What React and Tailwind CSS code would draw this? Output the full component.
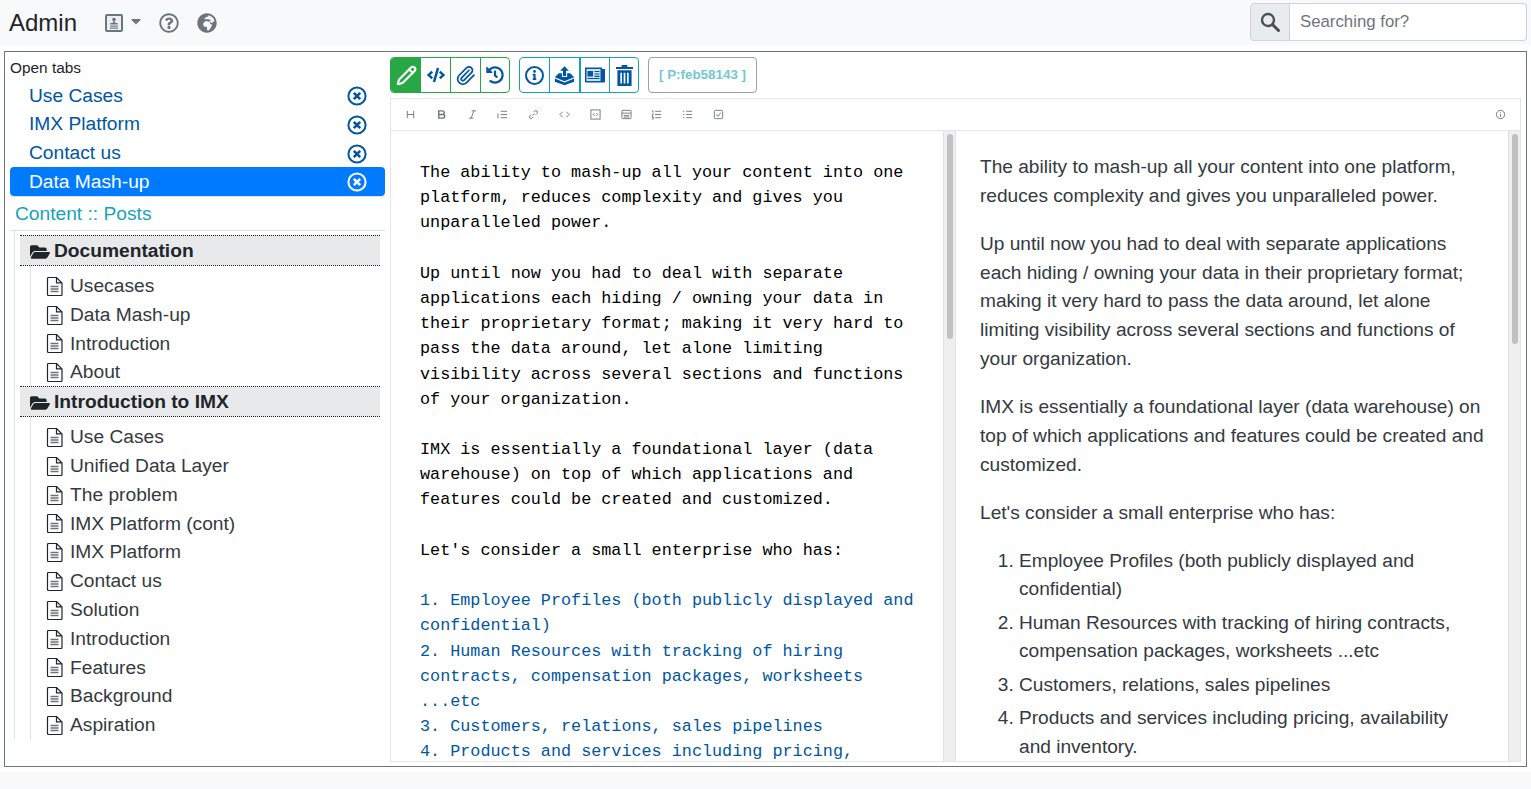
import React from "react";
import {
  FaCode,
  FaHistory,
  FaRegQuestionCircle,
  FaGlobeAfrica,
  FaFolderOpen,
  FaCaretDown,
  FaInfo,
} from "react-icons/fa";
import { Paperclip, Pencil } from "lucide-react";

const sans = "font-['Liberation_Sans',Arial,sans-serif]";

const openTabs = ["Use Cases", "IMX Platform", "Contact us", "Data Mash-up"];

const tree = [
  { title: "Documentation", items: ["Usecases", "Data Mash-up", "Introduction", "About"] },
  {
    title: "Introduction to IMX",
    items: [
      "Use Cases",
      "Unified Data Layer",
      "The problem",
      "IMX Platform (cont)",
      "IMX Platform",
      "Contact us",
      "Solution",
      "Introduction",
      "Features",
      "Background",
      "Aspiration",
    ],
  },
];

const sourceLines = [
  ["The ability to mash-up all your content into one", 0],
  ["platform, reduces complexity and gives you", 0],
  ["unparalleled power.", 0],
  ["", 0],
  ["Up until now you had to deal with separate", 0],
  ["applications each hiding / owning your data in", 0],
  ["their proprietary format; making it very hard to", 0],
  ["pass the data around, let alone limiting", 0],
  ["visibility across several sections and functions", 0],
  ["of your organization.", 0],
  ["", 0],
  ["IMX is essentially a foundational layer (data", 0],
  ["warehouse) on top of which applications and", 0],
  ["features could be created and customized.", 0],
  ["", 0],
  ["Let's consider a small enterprise who has:", 0],
  ["", 0],
  ["1. Employee Profiles (both publicly displayed and", 1],
  ["confidential)", 1],
  ["2. Human Resources with tracking of hiring", 1],
  ["contracts, compensation packages, worksheets", 1],
  ["...etc", 1],
  ["3. Customers, relations, sales pipelines", 1],
  ["4. Products and services including pricing,", 1],
];

function ContactIcon() {
  return (
    <svg viewBox="0 0 18 18" className="w-[18px] h-[18px]" fill="none">
      <rect x="1" y="1" width="16" height="16" rx="1" stroke="#6c757d" strokeWidth="2" fill="#eceeef" />
      <circle cx="9" cy="5.6" r="1.8" fill="#6c757d" />
      <path d="M8 7.4h2l.3 1.6h2.4v1.4H5.3V9h2.4z" fill="#6c757d" />
      <rect x="5" y="11.6" width="8" height="1.1" fill="#6c757d" />
      <rect x="5" y="13.6" width="8" height="1.1" fill="#6c757d" />
    </svg>
  );
}

function SearchIcon() {
  return (
    <svg viewBox="0 0 20 20" className="w-[20px] h-[20px]" fill="none" stroke="#495057">
      <circle cx="8" cy="8" r="6" strokeWidth="2.4" />
      <path d="M12.5 12.5l6 6" strokeWidth="3" strokeLinecap="round" />
    </svg>
  );
}

function CloseIcon() {
  return (
    <svg viewBox="0 0 20 20" className="w-[20px] h-[20px]" fill="none" stroke="currentColor">
      <circle cx="10" cy="10" r="8.6" strokeWidth="2" />
      <path d="M6.8 6.8l6.4 6.4M13.2 6.8l-6.4 6.4" strokeWidth="2.6" />
    </svg>
  );
}

function DocIcon() {
  return (
    <svg viewBox="0 0 17 19" className="w-[17px] h-[19px] shrink-0" fill="none">
      <path d="M1.5 1.5a1 1 0 011-1h8l5.5 5.5v11.5a1 1 0 01-1 1h-12.5a1 1 0 01-1-1z" stroke="#212529" strokeWidth="1.2" />
      <path d="M10.5.8v5h5.3" stroke="#212529" strokeWidth="1.2" />
      <path d="M4.5 9.5h8M4.5 12h8M4.5 14.5h8" stroke="#6f7378" strokeWidth="1.3" />
    </svg>
  );
}

function UploadBoxIcon() {
  return (
    <svg viewBox="0 0 24 24" className="w-[21px] h-[21px]" fill="#0056a3">
      <path d="M12 1.5l5 5h-3.2v6h-3.6v-6H7z" />
      <path d="M5.5 9.5H9v4.2h6V9.5h3.5L23 14l-11 4.5L1 14z" />
      <path d="M1 15.5l11 4.5 11-4.5V19l-11 4L1 19z" />
    </svg>
  );
}

function NewspaperIcon() {
  return (
    <svg viewBox="0 0 20 18" className="w-[20px] h-[18px]">
      <path d="M0 1.5h17V3h3v12.5a1 1 0 01-1 1H1a1 1 0 01-1-1z" fill="#0056a3" />
      <rect x="1.5" y="3" width="14" height="12" fill="#cfe0ee" />
      <rect x="2.5" y="5" width="5.5" height="5.5" fill="#0056a3" />
      <path d="M9.5 5.5h5M9.5 8h5M9.5 10.3h5M2.5 12.5h12" stroke="#0056a3" strokeWidth="1.2" />
    </svg>
  );
}

function TrashIcon() {
  return (
    <svg viewBox="0 0 18 22" className="w-[17px] h-[21px]" fill="#0056a3">
      <path d="M6 0h6v2h6v2.2H0V2h6z" />
      <path d="M1.5 5.5h15V22h-15zM4.6 8v11.5h1.7V8zM8.1 8v11.5h1.8V8zM11.7 8v11.5h1.7V8z" fillRule="evenodd" />
    </svg>
  );
}

function InfoRingIcon() {
  return (
    <span className="flex items-center justify-center w-[19px] h-[19px] rounded-full border-2 border-[#0056a3] text-[#0056a3]">
      <FaInfo className="w-[9px] h-[10px]" />
    </span>
  );
}

function ToolBtn({ children, className = "" }) {
  return <div className={`flex items-center justify-center h-full ${className}`}>{children}</div>;
}

// small gray editor toolbar glyphs
function EdIcon({ children, className = "" }) {
  return (
    <svg viewBox="0 0 12 12" className={`w-[11px] h-[11px] ${className}`} fill="none" stroke="#6c757d" strokeWidth="1">
      {children}
    </svg>
  );
}

const editorTools = [
  <EdIcon><path d="M2.5 2v8M9.5 2v8M2.5 6h7" /></EdIcon>,
  <EdIcon><path d="M3 2h4a2 2 0 010 4H3zM3 6h4.5a2 2 0 010 4H3z" strokeWidth="1.5" /></EdIcon>,
  <EdIcon><path d="M5 2h5M2 10h5M7.5 2l-3 8" /></EdIcon>,
  <EdIcon><path d="M4 2.5h7M4 6h7M4 9.5h7M1 5v5" /></EdIcon>,
  <EdIcon><path d="M5 7l2-2M3.5 6L2 7.5a1.8 1.8 0 002.5 2.5L6 8.5M6 3.5L7.5 2a1.8 1.8 0 012.5 2.5L8.5 6" /></EdIcon>,
  <EdIcon><path d="M4 3L1 6l3 3M8 3l3 3-3 3" /></EdIcon>,
  <EdIcon><rect x="1" y="1" width="10" height="10" /><path d="M5 4.5L3.5 6 5 7.5M7 4.5L8.5 6 7 7.5" /></EdIcon>,
  <EdIcon><rect x="1" y="1.5" width="10" height="9" rx="1" /><path d="M1 4.5h10M3 7h6M3 8.8h6" /></EdIcon>,
  <EdIcon><path d="M4.5 2.5H11M4.5 6H11M4.5 9.5H11M1 2h1.2v2M1 5.5h1.5L1 8h1.5M1 9h1.5v2H1" /></EdIcon>,
  <EdIcon><path d="M4.5 2.5H11M4.5 6H11M4.5 9.5H11M1 2.5h1.5M1 6h1.5M1 9.5h1.5" /></EdIcon>,
  <EdIcon><rect x="1.5" y="1.5" width="9" height="9" rx="1" /><path d="M3.5 6l2 2 3-4" /></EdIcon>,
];

export default function App() {
  return (
    <div className={`${sans} w-[1531px] h-[789px] overflow-hidden bg-white text-[#212529] flex flex-col`}>
      {/* top navbar */}
      <header className="h-[45px] shrink-0 bg-[#f8f9fa] flex items-center justify-between pl-[9px] pr-[4px]">
        <div className="flex items-center">
          <span className="text-[24px] leading-none">Admin</span>
          <div className="flex items-center ml-[28px] text-[#6c757d]">
            <ContactIcon />
            <FaCaretDown className="ml-[5px] w-[16px] h-[16px] mt-[-4px]" />
            <FaRegQuestionCircle className="ml-[15px] w-[20px] h-[20px]" />
            <FaGlobeAfrica className="ml-[18px] w-[20px] h-[20px]" />
          </div>
        </div>
        <div className="flex h-[38px] w-[277px] mt-[-1px]">
          <div className="w-[40px] flex items-center justify-center bg-[#e9ecef] border border-[#ced4da] rounded-l-[4px]">
            <SearchIcon />
          </div>
          <div className="flex-1 flex items-center pl-[10px] bg-white border border-l-0 border-[#ced4da] rounded-r-[4px] text-[16.8px] text-[#6c757d]">
            Searching for?
          </div>
        </div>
      </header>

      {/* main frame */}
      <main className="mx-[4px] mt-[6px] h-[716px] w-[1523px] shrink-0 border border-[#6c757d] flex overflow-hidden">
        <aside className="w-[385px] shrink-0 pl-[5px] pr-[5px] flex flex-col">
          <div className="text-[15.4px] leading-[18px] mt-[7px]">Open tabs</div>
          <ul className="mt-[3.6px] text-[19.2px] text-[#0056a3]">
            {openTabs.map((t, i) => (
              <li
                key={t}
                className={`flex items-center justify-between h-[28.8px] pt-[2px] pl-[19px] pr-[18px] ${
                  i === 3 ? "bg-[#007bff] text-white rounded-[4px]" : ""
                }`}
              >
                <span>{t}</span>
                <CloseIcon />
              </li>
            ))}
          </ul>
          <div className="h-[35.2px] border-t border-b border-[#dee2e6] pl-[5px] text-[19.2px] leading-[33px] text-[#17a2b8]">
            Content :: Posts
          </div>
          <div className="ml-[4px] pl-[5px] border-l border-[#dee2e6] pt-[4px]">
            {tree.map((group) => (
              <div key={group.title}>
                <div className="flex items-center h-[31px] pt-[2px] w-[360px] bg-[#e8e9eb] border-y border-dotted border-[#212529] pl-[10px] text-[19.2px] font-bold">
                  <FaFolderOpen className="w-[20px] h-[20px] mr-[4px] mt-[1px]" />
                  {group.title}
                </div>
                <ul className="ml-[10px] pl-[15px] pt-[6px] mb-[-1px] border-l border-[#dee2e6] text-[19.2px] text-[#343a40]">
                  {group.items.map((item, i) => (
                    <li key={item + i} className="flex items-center h-[28.8px] gap-[7px]">
                      <DocIcon />
                      {item}
                    </li>
                  ))}
                </ul>
              </div>
            ))}
          </div>
        </aside>

        <section className="flex-1 min-w-0 flex flex-col">
          {/* action buttons */}
          <div className="h-[46px] shrink-0 flex items-start pt-[5px]">
            <div className="flex h-[36px] border border-[#28a745] rounded-[4px] overflow-hidden text-[#0056a3]">
              <ToolBtn className="w-[30px] bg-[#28a745] text-white"><Pencil className="w-[21px] h-[21px]" strokeWidth={2.4} /></ToolBtn>
              <ToolBtn className="w-[29px]"><FaCode className="w-[18px] h-[18px]" /></ToolBtn>
              <ToolBtn className="w-[30px] border-l border-[#28a745]"><Paperclip className="w-[21px] h-[21px]" strokeWidth={2} /></ToolBtn>
              <ToolBtn className="w-[29px] border-l border-[#28a745]"><FaHistory className="w-[18px] h-[18px]" /></ToolBtn>
            </div>
            <div className="flex h-[36px] ml-[9px] border border-[#17a2b8] rounded-[4px] overflow-hidden">
              <ToolBtn className="w-[29px]"><InfoRingIcon /></ToolBtn>
              <ToolBtn className="w-[30px] border-l border-[#17a2b8]"><UploadBoxIcon /></ToolBtn>
              <ToolBtn className="w-[30px] border-l-2 border-[#17a2b8]"><NewspaperIcon /></ToolBtn>
              <ToolBtn className="w-[29px] border-l border-[#17a2b8]"><TrashIcon /></ToolBtn>
            </div>
            <div className="flex items-center justify-center h-[36px] w-[109px] ml-[9px] border border-[#9ba1a6] rounded-[4px] text-[13.4px] font-bold text-[#74c7d4]">
              [ P:feb58143 ]
            </div>
          </div>

          {/* editor */}
          <div className="w-[1131px] h-[664px] border border-[#e2e6ec] flex flex-col">
            <div className="h-[32px] shrink-0 border-b border-[#e2e6ec] flex items-center justify-between pl-[14px] pr-[14px]">
              <div className="flex items-center gap-[19.8px]">
                {editorTools.map((t, i) => (
                  <span key={i} className="flex">{t}</span>
                ))}
              </div>
              <EdIcon><circle cx="6" cy="6" r="4.5" /><path d="M6 5.5v3M6 3.5v1" /></EdIcon>
            </div>
            <div className="flex-1 min-h-0 flex">
              <div className="w-[564px] shrink-0 flex overflow-hidden">
                <div className="w-[552px] shrink-0 pl-[29px] pt-[29px] font-['Liberation_Mono',monospace] text-[16.8px] leading-[25.2px] text-black">
                  {sourceLines.map(([line, blue], i) => (
                    <div key={i} className={`h-[25.2px] whitespace-pre ${blue ? "text-[#0056a3]" : ""}`}>
                      {line}
                    </div>
                  ))}
                </div>
                <div className="w-[12px] shrink-0 bg-[#efefef] border-l border-[#e0e0e0] pt-[3px] flex justify-center">
                  <div className="w-[6px] h-[205px] bg-[#c1c1c1] rounded-full" />
                </div>
              </div>
              <div className="flex-1 flex overflow-hidden">
                <div className="flex-1 pl-[24px] pt-[22px] pr-[18px] text-[19.12px] leading-[28.8px] text-[#343a40] border-l border-[#e2e6ec]">
                  <p className="mb-[19.2px]">The ability to mash-up all your content into one platform, reduces complexity and gives you unparalleled power.</p>
                  <p className="mb-[19.2px]">Up until now you had to deal with separate applications each hiding / owning your data in their proprietary format; making it very hard to pass the data around, let alone limiting visibility across several sections and functions of your organization.</p>
                  <p className="mb-[19.2px]">IMX is essentially a foundational layer (data warehouse) on top of which applications and features could be created and customized.</p>
                  <p className="mb-[19.2px]">Let's consider a small enterprise who has:</p>
                  <ol className="list-decimal pl-[39px] pr-[11px]">
                    <li className="mb-[4.5px]">Employee Profiles (both publicly displayed and confidential)</li>
                    <li className="mb-[4.5px]">Human Resources with tracking of hiring contracts, compensation packages, worksheets ...etc</li>
                    <li className="mb-[4.5px]">Customers, relations, sales pipelines</li>
                    <li>Products and services including pricing, availability and inventory.</li>
                  </ol>
                </div>
                <div className="w-[12px] shrink-0 bg-[#efefef] border-l border-[#e0e0e0] pt-[3px] flex justify-center">
                  <div className="w-[6px] h-[210px] bg-[#c1c1c1] rounded-full" />
                </div>
              </div>
            </div>
          </div>
        </section>
      </main>
      <div className="flex-1 mt-[5px] bg-[#f8f9fa]" />
    </div>
  );
}
